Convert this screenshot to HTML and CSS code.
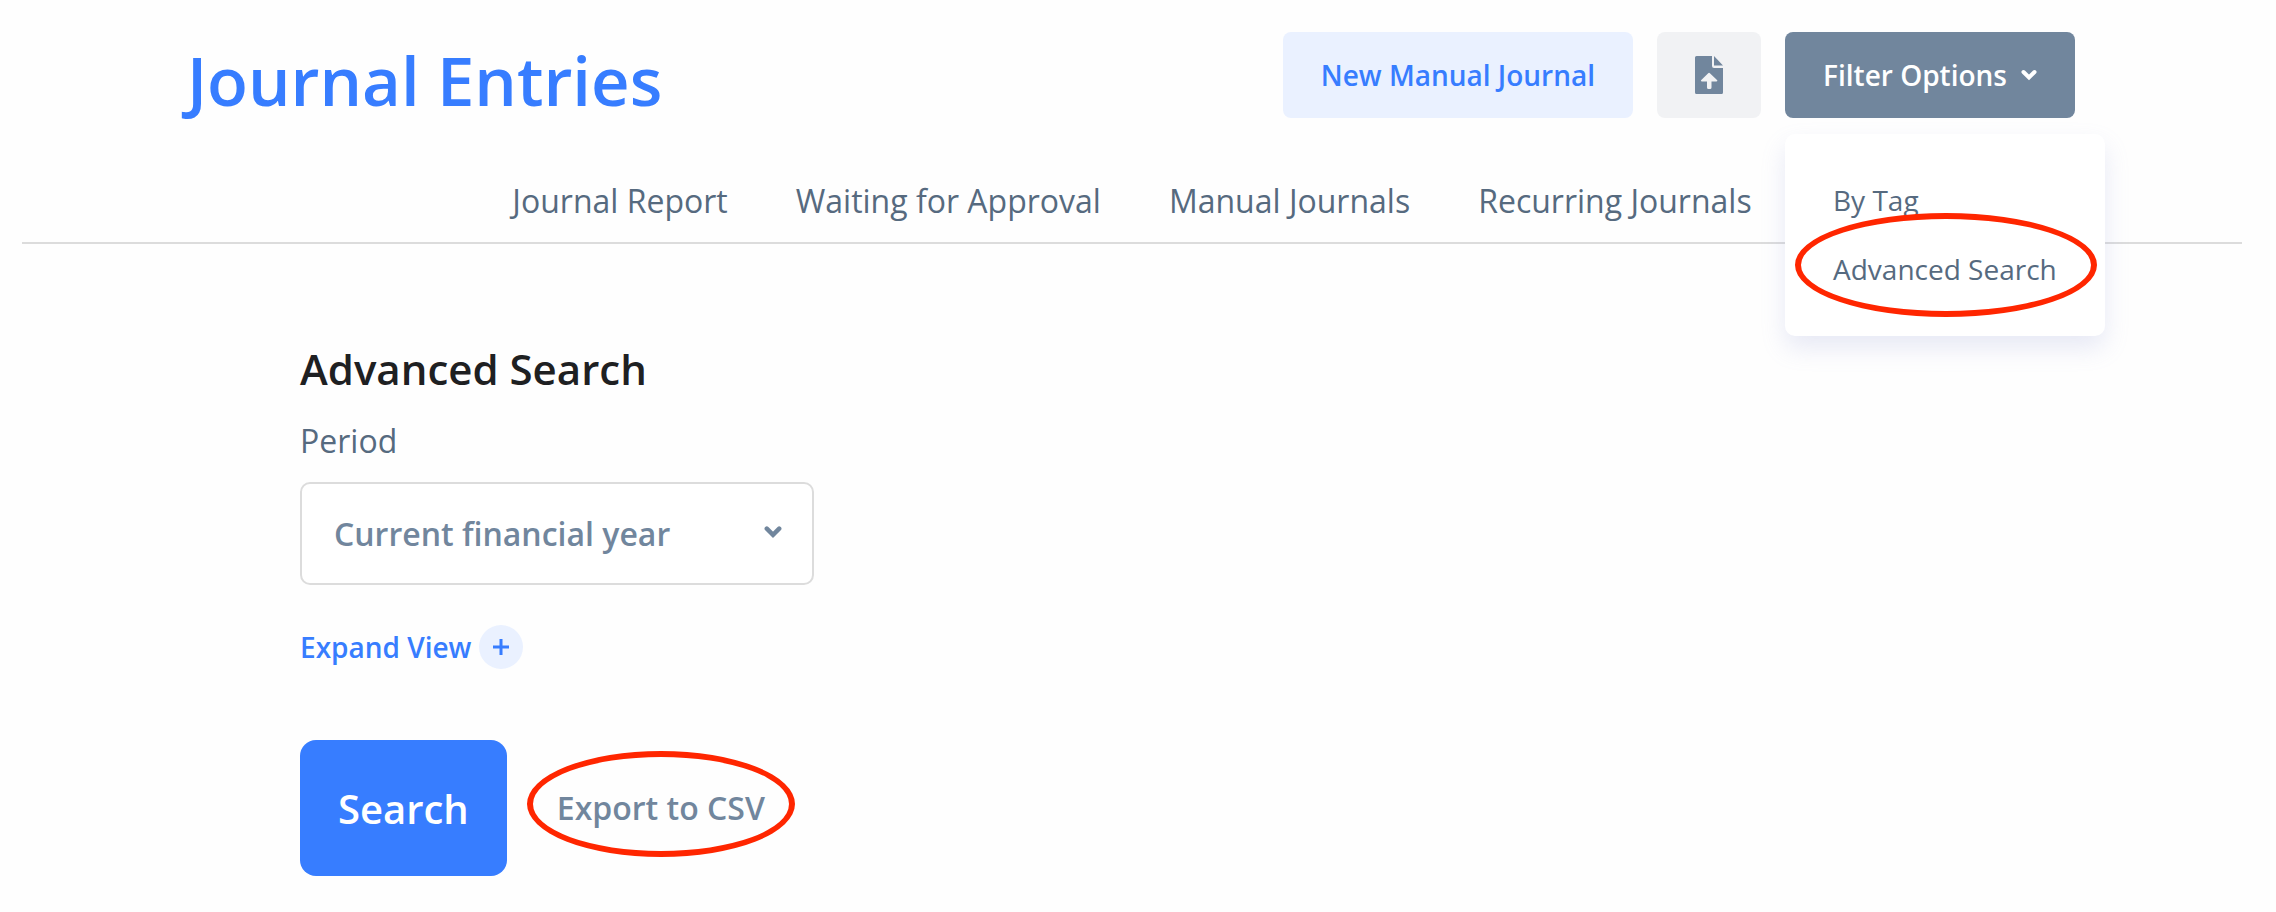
FILE: index.html
```html
<!DOCTYPE html>
<html lang="en">
<head>
  <meta charset="UTF-8">
  <title>Journal Entries</title>
  <link rel="stylesheet" href="styles.css">
</head>
<body>

<header class="header">
  <h1>Journal Entries</h1>
  <div class="toolbar">
    <button type="button" class="btn btn-soft">New Manual Journal</button>
    <button type="button" class="btn btn-icon" aria-label="Import journals">
      <svg width="28" height="38" viewBox="0 0 28 38">
        <path fill="#71869d" d="M1.500 0H17v10a2 2 0 0 0 2 2h9v24.500a1.500 1.500 0 0 1-1.500 1.500h-25A1.500 1.500 0 0 1 0 36.500v-35A1.500 1.500 0 0 1 1.500 0z"/>
        <path fill="#71869d" d="M19 0l9 9.500H19z"/>
        <path fill="#f1f2f4" d="M13.200 17.200a1.200 1.200 0 0 1 1.700 0l7.100 6.900c.7.700.3 1.500-.6 1.500H16.500v5.900a1.500 1.500 0 0 1-1.500 1.500h-1.500a1.500 1.500 0 0 1-1.500-1.500v-5.900H6.900c-.9 0-1.300-.8-.6-1.500z"/>
      </svg>
    </button>
    <div class="dropdown">
      <button type="button" class="btn btn-dark" aria-expanded="true">
        Filter Options
        <svg class="chevron" width="16" height="12" viewBox="0 0 16 12"><path d="M2.500 3l5.500 5.500L13.500 3"/></svg>
      </button>
      <div class="menu">
        <a href="#">By Tag</a>
        <a href="#" class="circled">Advanced Search</a>
      </div>
    </div>
  </div>
</header>

<nav class="tabs">
  <a href="#">Journal Report</a>
  <a href="#">Waiting for Approval</a>
  <a href="#">Manual Journals</a>
  <a href="#">Recurring Journals</a>
</nav>

<form class="search">
  <h2>Advanced Search</h2>
  <label for="period">Period</label>
  <div class="select">
    <select id="period">
      <option>Current financial year</option>
    </select>
    <svg class="chevron" width="18" height="14" viewBox="0 0 16 12"><path d="M2.500 3l5.500 5.500L13.500 3"/></svg>
  </div>

  <a href="#" class="expand">
    Expand View
    <span class="plus">
      <svg width="16" height="16" viewBox="0 0 16 16"><path d="M8 0v16M0 8h16" stroke="#377dff" stroke-width="3"/></svg>
    </span>
  </a>

  <div class="actions">
    <button type="button" class="btn-search">Search</button>
    <a href="#" class="export circled">Export to CSV</a>
  </div>
</form>

</body>
</html>
```

FILE: styles.css
```css
* {
  box-sizing: border-box;
}

body {
  margin: 0;
  background: #fefefe;
  color: #566a7f;
  font-family: "Open Sans", sans-serif;
  font-size: 32px;
  line-height: 44px;
}

a {
  color: inherit;
  text-decoration: none;
}

h1, h2 {
  margin: 0;
  font-weight: 600;
}

button, select {
  font-family: inherit;
  font-weight: 600;
  border: 0;
  cursor: pointer;
}

.header {
  display: flex;
  justify-content: space-between;
  align-items: flex-start;
  padding: 32px 201px 0 187px;
}

h1 {
  color: #377dff;
  font-size: 67px;
  line-height: 96px;
}

.toolbar {
  display: flex;
  gap: 24px;
}

.btn {
  display: flex;
  align-items: center;
  height: 86px;
  padding: 0 38px;
  border-radius: 8px;
  font-size: 28px;
}

.btn-soft {
  background: #eaf1ff;
  color: #377dff;
}

.btn-icon {
  background: #f1f2f4;
}

.btn-dark {
  gap: 14px;
  background: #71869d;
  color: #fff;
}

.chevron path {
  fill: none;
  stroke: currentColor;
  stroke-width: 4;
  stroke-linecap: round;
}

.dropdown {
  position: relative;
}

.menu {
  position: absolute;
  top: 102px;
  left: 0;
  padding: 32px 0;
  background: #fff;
  border-radius: 10px;
  box-shadow: 0 12px 24px rgba(140, 152, 210, 0.2);
  font-size: 28px;
  white-space: nowrap;
}

.menu a {
  display: block;
  padding: 0 48px;
  line-height: 69px;
}

/* red marker ring around a link */
.circled {
  position: relative;
}

.circled::after {
  content: "";
  position: absolute;
  inset: -22px 8px -13px 10px;
  border: 6px solid #ff2600;
  border-radius: 50%;
}

.tabs {
  display: flex;
  justify-content: center;
  gap: 68px;
  margin: 51px 34px 0 22px;
  padding-bottom: 19px;
  border-bottom: 2px solid #dcdcdc;
}

.search {
  padding: 97px 300px 36px;
}

h2 {
  margin-bottom: 22px;
  color: #1e2022;
  font-size: 42px;
  line-height: 56px;
}

.search label {
  display: block;
  margin-bottom: 19px;
}

.select {
  position: relative;
  width: 514px;
  color: #71869d;
}

.select select {
  display: block;
  width: 100%;
  height: 103px;
  padding: 0 80px 0 32px;
  appearance: none;
  background: #fff;
  border: 2px solid #dcdcdc;
  border-radius: 10px;
  color: inherit;
  font-size: 32px;
}

.select .chevron {
  position: absolute;
  top: 43px;
  right: 32px;
  pointer-events: none;
}

.expand {
  display: flex;
  align-items: center;
  gap: 8px;
  width: fit-content;
  margin-top: 40px;
  color: #377dff;
  font-size: 28px;
  font-weight: 600;
}

.plus {
  display: flex;
  align-items: center;
  justify-content: center;
  width: 44px;
  height: 44px;
  border-radius: 50%;
  background: #eaf1ff;
}

.actions {
  display: flex;
  align-items: center;
  gap: 20px;
  margin-top: 71px;
}

.btn-search {
  height: 136px;
  padding: 0 38px;
  border-radius: 16px;
  background: #377dff;
  color: #fff;
  font-size: 40px;
}

.export {
  padding: 0 30px;
  color: #71869d;
  font-weight: 600;
}

.export.circled::after {
  inset: -35px 0 -27px;
}
```
